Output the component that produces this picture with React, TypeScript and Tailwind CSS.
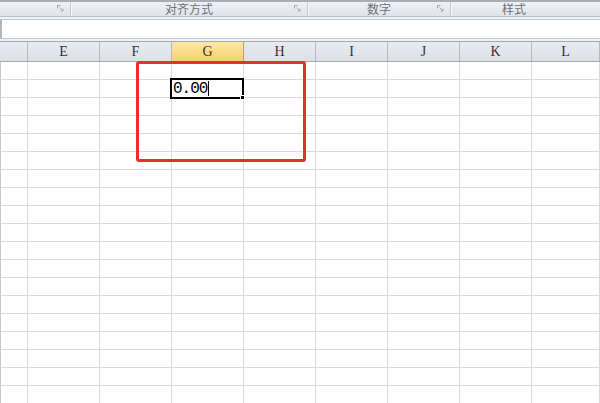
import React from "react";

const cols = ["", "E", "F", "G", "H", "I", "J", "K", "L"];
const widths = ["w-[28px]", "w-[72px]", "w-[72px]", "w-[72px]", "w-[72px]", "w-[72px]", "w-[72px]", "w-[72px]", "flex-1"];
const rows = Array.from({ length: 19 }, (_, i) => i);

function Launcher() {
  return (
    <svg width="7" height="7" viewBox="0 0 7 7" className="shrink-0">
      <path d="M0.5 0.5h3M0.5 0.5v3" stroke="#a3a9b1" strokeWidth="1" fill="none" />
      <path d="M2.5 2.5l3.5 3.5M6 3.5v2.5h-2.5" stroke="#a3a9b1" strokeWidth="1" fill="none" />
    </svg>
  );
}

function RibbonGroup({ label, width, launcher = true }: { label?: string; width: string; launcher?: boolean }) {
  return (
    <div className={`${width} h-full flex items-center border-r border-[#c3c9d1] shadow-[1px_0_0_#f7f8fa] relative`}>
      <span className="flex-1 text-center text-[12px] leading-none text-[#6c7178]">{label}</span>
      {launcher && (
        <div className="absolute right-[6px] top-[3px]">
          <Launcher />
        </div>
      )}
    </div>
  );
}

export default function App() {
  return (
    <div className="w-[600px] h-[403px] overflow-hidden bg-white relative font-['Noto_Sans_CJK_SC','Liberation_Sans',sans-serif]">
      {/* ribbon group labels */}
      <div className="h-[17px] flex border-t-2 border-t-[#a9aeb5] border-b border-b-[#b9c0c9] bg-gradient-to-b from-[#eef1f5] to-[#dfe4ea]">
        <RibbonGroup width="w-[71px]" />
        <RibbonGroup width="w-[237px]" label="对齐方式" />
        <RibbonGroup width="w-[143px]" label="数字" />
        <div className="flex-1 h-full flex items-center">
          <span className="w-[126px] text-center text-[12px] leading-none text-[#6c7178]">样式</span>
        </div>
      </div>
      <div className="h-[2px] bg-[#f1f3f6]" />
      {/* formula bar */}
      <div className="h-[20px] bg-white border-t border-b border-[#c5cad1] border-l-2 border-l-[#b0b5bc]" />
      <div className="h-[2px] bg-[#eef0f3]" />
      {/* column headers */}
      <div className="flex h-[21px] border-t border-b border-[#a5abb3] bg-gradient-to-b from-[#e8ebef] to-[#dde1e6]">
        {cols.map((c, i) => (
          <div
            key={i}
            className={`${widths[i]} h-full flex items-center justify-center border-r border-[#b4bac2] text-[14px] text-[#333] font-['Liberation_Serif',serif] ${
              c === "G" ? "bg-gradient-to-b from-[#fde9a6] to-[#f7d06a] border-r-[#c9a24a]" : ""
            }`}
          >
            {c}
          </div>
        ))}
      </div>
      {/* grid */}
      {rows.map((r) => (
        <div key={r} className="flex h-[18px]">
          {cols.map((c, i) => (
            <div
              key={i}
              className={`${widths[i]} h-full border-r border-b border-[#dadada] relative ${i === 0 ? "border-l border-l-[#c8c8c8]" : ""}`}
            >
              {r === 1 && c === "G" && (
                <div className="absolute -left-[2px] -top-[2px] -right-[1px] -bottom-[2px] border-2 border-black z-10 flex items-center">
                  <span className="pl-[1px] text-[16px] leading-none tracking-[-1px] text-black font-['Liberation_Mono',monospace]">0.00</span>
                  <span className="w-px h-[15px] bg-black ml-[1px]" />
                  <span className="absolute -right-[3px] -bottom-[3px] w-[5px] h-[5px] bg-black border border-white" />
                </div>
              )}
            </div>
          ))}
        </div>
      ))}
      {/* annotation */}
      <div className="absolute left-[136px] top-[61px] w-[170px] h-[101px] border-[3px] border-[#e8302a] rounded-[3px] z-20" />
    </div>
  );
}
